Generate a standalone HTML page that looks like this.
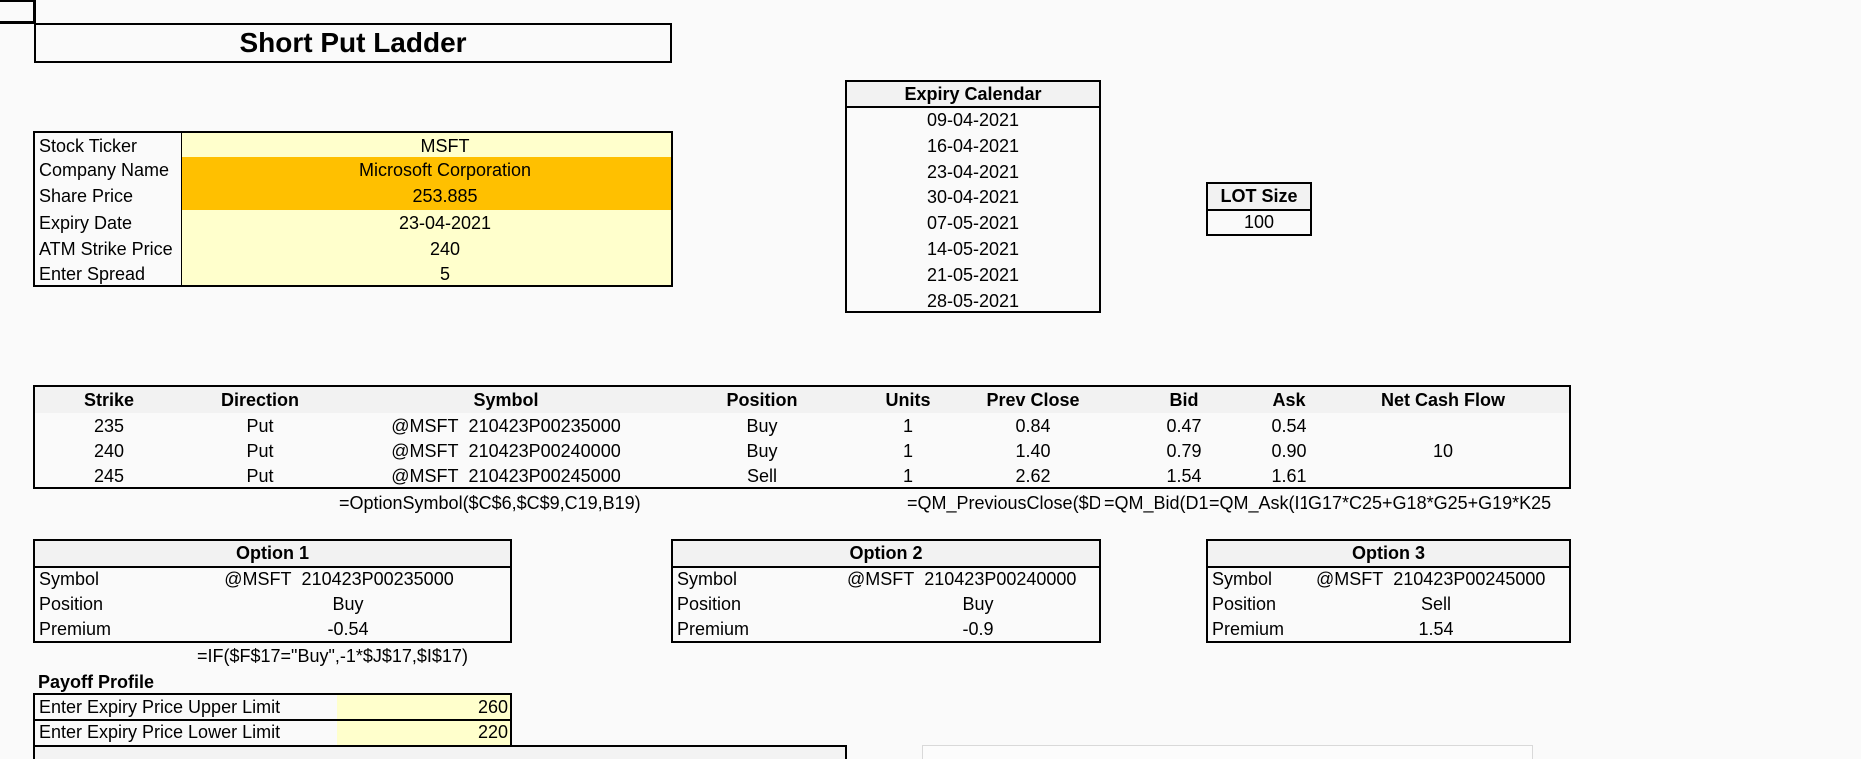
<!DOCTYPE html>
<html><head><meta charset="utf-8"><style>
*{margin:0;padding:0;box-sizing:border-box}
html,body{width:1861px;height:759px;overflow:hidden}
body{background:#fafafa;position:relative;font-family:"Liberation Sans",Arial,sans-serif;font-size:18px;color:#000}
.a{position:absolute}
.box{position:absolute;border:2px solid #000}
.row{position:absolute;left:0;right:0;height:26px;line-height:26px;white-space:nowrap}
.c{position:absolute;text-align:center;transform:translateX(-50%);white-space:nowrap}
.hd{background:#f2f2f2;font-weight:bold;border-bottom:2px solid #000}
.clip{position:absolute;overflow:hidden;white-space:nowrap;line-height:26px;height:26px}
</style></head><body>
<div class="box" style="left:0;top:0;width:36px;height:24px;border-width:2px 3px 3px 0"></div>
<div class="box" style="left:34px;top:23px;width:638px;height:40px;font-weight:bold;font-size:28px;text-align:center;line-height:36px">Short Put Ladder</div>

<div class="box" style="left:33px;top:131px;width:640px;height:156px;background:#ffffcc;overflow:hidden">
 <div class="a" style="left:146px;top:24px;right:0;height:53px;background:#ffc000"></div>
 <div class="a" style="left:0;top:0;width:147px;height:100%;background:#fafafa;border-right:1.5px solid #000"></div>
 <div class="row" style="top:0"><span class="a" style="left:4px">Stock Ticker</span><span class="c" style="left:410px">MSFT</span></div>
 <div class="row" style="top:24px"><span class="a" style="left:4px;width:142px;overflow:hidden">Company Name</span><span class="c" style="left:410px">Microsoft Corporation</span></div>
 <div class="row" style="top:50px"><span class="a" style="left:4px">Share Price</span><span class="c" style="left:410px">253.885</span></div>
 <div class="row" style="top:77px"><span class="a" style="left:4px">Expiry Date</span><span class="c" style="left:410px">23-04-2021</span></div>
 <div class="row" style="top:103px"><span class="a" style="left:4px;width:140px;overflow:hidden">ATM Strike Price</span><span class="c" style="left:410px">240</span></div>
 <div class="row" style="top:128px"><span class="a" style="left:4px">Enter Spread</span><span class="c" style="left:410px">5</span></div>
</div>

<div class="box" style="left:845px;top:80px;width:256px;height:233px;text-align:center">
 <div class="hd" style="height:26px;line-height:24px">Expiry Calendar</div>
 <div style="line-height:25.8px">09-04-2021<br>16-04-2021<br>23-04-2021<br>30-04-2021<br>07-05-2021<br>14-05-2021<br>21-05-2021<br>28-05-2021</div>
</div>

<div class="box" style="left:1206px;top:182px;width:106px;height:54px;text-align:center">
 <div class="hd" style="height:27px;line-height:25px">LOT Size</div>
 <div style="line-height:23px">100</div>
</div>

<div class="box" style="left:33px;top:385px;width:1538px;height:104px">
 <div class="a" style="left:0;right:0;top:0;height:26px;background:#f2f2f2"></div>
 <div class="row" style="top:0;font-weight:bold">
  <span class="c" style="left:74px">Strike</span><span class="c" style="left:225px">Direction</span><span class="c" style="left:471px">Symbol</span><span class="c" style="left:727px">Position</span><span class="c" style="left:873px">Units</span><span class="c" style="left:998px">Prev Close</span><span class="c" style="left:1149px">Bid</span><span class="c" style="left:1254px">Ask</span><span class="c" style="left:1408px">Net Cash Flow</span>
 </div>
 <div class="row" style="top:26px"><span class="c" style="left:74px">235</span><span class="c" style="left:225px">Put</span><span class="c" style="left:471px">@MSFT&nbsp; 210423P00235000</span><span class="c" style="left:727px">Buy</span><span class="c" style="left:873px">1</span><span class="c" style="left:998px">0.84</span><span class="c" style="left:1149px">0.47</span><span class="c" style="left:1254px">0.54</span></div>
 <div class="row" style="top:51px"><span class="c" style="left:74px">240</span><span class="c" style="left:225px">Put</span><span class="c" style="left:471px">@MSFT&nbsp; 210423P00240000</span><span class="c" style="left:727px">Buy</span><span class="c" style="left:873px">1</span><span class="c" style="left:998px">1.40</span><span class="c" style="left:1149px">0.79</span><span class="c" style="left:1254px">0.90</span><span class="c" style="left:1408px">10</span></div>
 <div class="row" style="top:76px"><span class="c" style="left:74px">245</span><span class="c" style="left:225px">Put</span><span class="c" style="left:471px">@MSFT&nbsp; 210423P00245000</span><span class="c" style="left:727px">Sell</span><span class="c" style="left:873px">1</span><span class="c" style="left:998px">2.62</span><span class="c" style="left:1149px">1.54</span><span class="c" style="left:1254px">1.61</span></div>
</div>

<div class="clip" style="left:339px;top:490px;width:400px">=OptionSymbol($C$6,$C$9,C19,B19)</div>
<div class="clip" style="left:907px;top:490px;width:193px">=QM_PreviousClose($D$17)</div>
<div class="clip" style="left:1104px;top:490px;width:104px">=QM_Bid(D17)</div>
<div class="clip" style="left:1209px;top:490px;width:98px">=QM_Ask(I17)</div>
<div class="clip" style="left:1308px;top:490px;width:262px">G17*C25+G18*G25+G19*K25</div>

<div class="box" style="left:33px;top:539px;width:479px;height:104px">
 <div class="hd" style="height:27px;line-height:25px;text-align:center">Option 1</div>
 <div class="row" style="top:25px"><span class="a" style="left:4px">Symbol</span><span class="c" style="left:304px">@MSFT&nbsp; 210423P00235000</span></div>
 <div class="row" style="top:50px"><span class="a" style="left:4px">Position</span><span class="c" style="left:313px">Buy</span></div>
 <div class="row" style="top:75px"><span class="a" style="left:4px">Premium</span><span class="c" style="left:313px">-0.54</span></div>
</div>
<div class="box" style="left:671px;top:539px;width:430px;height:104px">
 <div class="hd" style="height:27px;line-height:25px;text-align:center">Option 2</div>
 <div class="row" style="top:25px;overflow:hidden"><span class="a" style="left:174px">@MSFT&nbsp; 210423P00240000</span><span class="a" style="left:4px">Symbol</span></div>
 <div class="row" style="top:50px"><span class="a" style="left:4px">Position</span><span class="c" style="left:305px">Buy</span></div>
 <div class="row" style="top:75px"><span class="a" style="left:4px">Premium</span><span class="c" style="left:305px">-0.9</span></div>
</div>
<div class="box" style="left:1206px;top:539px;width:365px;height:104px">
 <div class="hd" style="height:27px;line-height:25px;text-align:center">Option 3</div>
 <div class="row" style="top:25px;overflow:hidden"><span class="a" style="left:4px">Symbol</span><span class="a" style="left:108px">@MSFT&nbsp; 210423P00245000</span></div>
 <div class="row" style="top:50px"><span class="a" style="left:4px">Position</span><span class="c" style="left:228px">Sell</span></div>
 <div class="row" style="top:75px"><span class="a" style="left:4px">Premium</span><span class="c" style="left:228px">1.54</span></div>
</div>

<div class="a" style="left:197px;top:643px;line-height:26px">=IF($F$17="Buy",-1*$J$17,$I$17)</div>
<div class="a" style="left:38px;top:669px;line-height:26px;font-weight:bold">Payoff Profile</div>

<div class="box" style="left:33px;top:693px;width:479px;height:54px;overflow:hidden">
 <div class="a" style="left:302px;right:0;top:0;bottom:0;background:#ffffcc"></div>
 <div class="a" style="left:0;right:0;top:24px;height:2px;background:#000"></div>
 <div class="row" style="top:-1px"><span class="a" style="left:4px">Enter Expiry Price Upper Limit</span><span class="a" style="right:2px">260</span></div>
 <div class="row" style="top:24px"><span class="a" style="left:4px">Enter Expiry Price Lower Limit</span><span class="a" style="right:2px">220</span></div>
</div>

<div class="box" style="left:33px;top:745px;width:814px;height:14px;background:#f3f3f3;border-bottom:none"></div>
<div class="a" style="left:922px;top:745px;width:611px;height:14px;border:1px solid #d9d9d9;border-bottom:none;background:#fcfcfc"></div>
</body></html>
